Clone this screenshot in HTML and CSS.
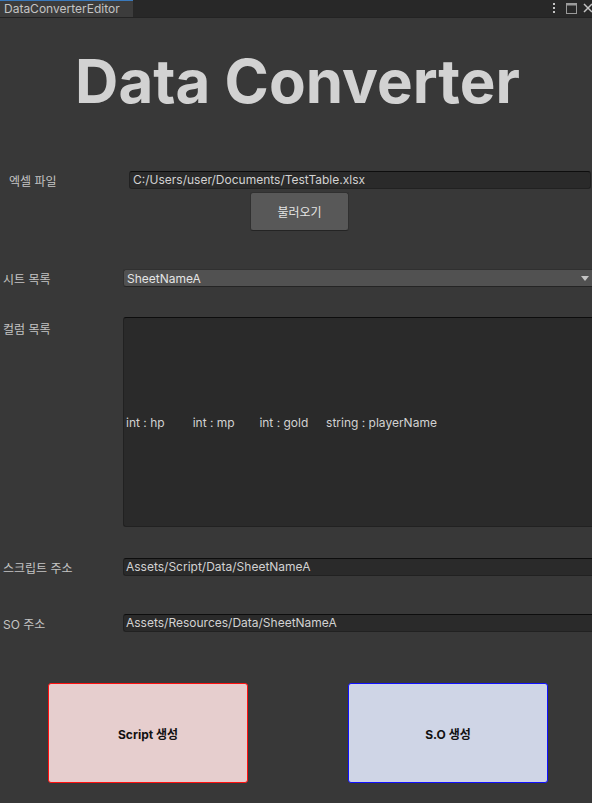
FILE: index.html
```html
<!DOCTYPE html>
<html>
<head>
<meta charset="utf-8">
<link rel="stylesheet" href="styles.css">
</head>
<body>
<div class="tabbar">
  <div class="tab">DataConverterEditor</div>
  <div class="spacer"></div>
  <div class="win-icons">
    <svg class="ico kebab" width="4" height="12" viewBox="0 0 4 12"><rect x="1" y="1" width="2" height="2" fill="#c4c4c4"/><rect x="1" y="5" width="2" height="2" fill="#c4c4c4"/><rect x="1" y="9" width="2" height="2" fill="#c4c4c4"/></svg>
    <svg class="ico max" width="11" height="11" viewBox="0 0 11 11"><rect x="0.5" y="0.5" width="10" height="10" fill="none" stroke="#9a9a9a"/><rect x="0.5" y="0.5" width="10" height="2" fill="#9a9a9a"/></svg>
    <svg class="ico close" width="9" height="10" viewBox="0 0 9 10"><path d="M1 1 L9 9 M9 1 L1 9" stroke="#c4c4c4" stroke-width="1.5"/></svg>
  </div>
</div>

<div class="panel">
  <h1 class="title">Data Converter</h1>

  <div class="file-section">
    <div class="row">
      <div class="label">엑셀 파일</div>
      <div class="field">C:/Users/user/Documents/TestTable.xlsx</div>
    </div>
    <div class="load-wrap"><button class="load-btn">불러오기</button></div>
  </div>

  <div class="row sheet-row">
    <div class="label">시트 목록</div>
    <div class="dropdown"><span>SheetNameA</span><span class="arrow"></span></div>
  </div>

  <div class="row col-row">
    <div class="label top">컬럼 목록</div>
    <div class="columns">
      <span class="col">int : hp</span>
      <span class="col">int : mp</span>
      <span class="col">int : gold</span>
      <span class="col">string : playerName</span>
    </div>
  </div>

  <div class="row script-row">
    <div class="label">스크립트 주소</div>
    <div class="field">Assets/Script/Data/SheetNameA</div>
  </div>

  <div class="row so-row">
    <div class="label">SO 주소</div>
    <div class="field">Assets/Resources/Data/SheetNameA</div>
  </div>

  <div class="actions">
    <button class="big-btn red">Script 생성</button>
    <button class="big-btn blue">S.O 생성</button>
  </div>
</div>
</body>
</html>
```

FILE: styles.css
```css
* { box-sizing: border-box; }

html, body {
  margin: 0;
  padding: 0;
}

body {
  width: 592px;
  height: 803px;
  overflow: hidden;
  background: #383838;
  font-family: Inter, "Noto Sans CJK KR", sans-serif;
  font-size: 12px;
  color: #c4c4c4;
}

.tabbar {
  display: flex;
  height: 18px;
  background: #282828;
  border-bottom: 1px solid #232323;
}

.tab {
  width: 133px;
  height: 17px;
  background: #3c3c3c;
  border-top: 1px solid #3a79bb;
  padding-left: 4px;
  line-height: 16px;
  font-size: 12px;
  color: #c4c4c4;
}

.spacer { flex: 1; }

.win-icons {
  display: flex;
  align-items: flex-start;
  padding-top: 2px;
}

.ico { display: block; }
.kebab { margin-right: 10px; }
.max { margin-right: 6px; margin-top: 1px; }
.close { margin-top: 1px; }

.panel {
  display: flex;
  flex-direction: column;
}

.title {
  margin: 27px 0 0;
  height: 72px;
  line-height: 72px;
  font-size: 60px;
  font-weight: 700;
  text-align: center;
  color: #d2d2d2;
  padding-left: 3px;
}

.row {
  display: flex;
  align-items: center;
  padding-left: 3px;
}

.label {
  width: 120px;
  flex: none;
  color: #c4c4c4;
  font-size: 12px;
}

.label.top {
  align-self: flex-start;
  padding-top: 3px;
}

.field {
  flex: 1;
  height: 18px;
  line-height: 16px;
  background: #2a2a2a;
  border: 1px solid #212121;
  border-top-color: #0d0d0d;
  border-radius: 3px 0 0 3px;
  border-right: none;
  padding-left: 2px;
  color: #d2d2d2;
  white-space: nowrap;
}

.file-section {
  margin-top: 54px;
  padding-left: 6px;
  padding-right: 1px;
}

.file-section .field {
  border-right: 1px solid #212121;
  border-radius: 3px;
  padding-left: 3px;
}

.load-wrap {
  display: flex;
  justify-content: center;
  margin-top: 3px;
  padding-left: 2px;
}

.load-btn {
  width: 99px;
  height: 39px;
  background: #585858;
  border: 1px solid #303030;
  border-bottom-color: #242424;
  border-radius: 3px;
  color: #e4e4e4;
  font-family: inherit;
  font-size: 12px;
  padding: 0;
}

.sheet-row { margin-top: 38px; }

.dropdown {
  flex: 1;
  height: 18px;
  display: flex;
  align-items: center;
  justify-content: space-between;
  background: #515151;
  border: 1px solid #303030;
  border-bottom-color: #242424;
  border-right: none;
  border-radius: 3px 0 0 3px;
  padding-left: 3px;
  color: #e4e4e4;
}

.arrow {
  width: 0;
  height: 0;
  border-left: 4px solid transparent;
  border-right: 4px solid transparent;
  border-top: 5px solid #c4c4c4;
  margin-right: 3px;
}

.col-row {
  margin-top: 30px;
  align-items: stretch;
}

.columns {
  flex: 1;
  height: 210px;
  display: flex;
  align-items: center;
  background: #2a2a2a;
  border: 1px solid #212121;
  border-top-color: #0d0d0d;
  border-right: none;
  border-radius: 3px 0 0 3px;
  padding-left: 2px;
  color: #d2d2d2;
}

.col {
  width: 66.7px;
  flex: none;
  white-space: nowrap;
}

.script-row { margin-top: 31px; }
.so-row { margin-top: 38px; }

.actions {
  display: flex;
  gap: 100px;
  padding-left: 48px;
  margin-top: 51px;
}

.big-btn {
  width: 200px;
  height: 100px;
  border-radius: 3px;
  font-family: inherit;
  font-size: 12px;
  font-weight: 700;
  color: #111111;
  padding: 0;
}

.big-btn.red {
  background: #e6cece;
  border: 1.5px solid #ff1010;
}

.big-btn.blue {
  background: #cfd5e6;
  border: 1.5px solid #1010ff;
}
```
